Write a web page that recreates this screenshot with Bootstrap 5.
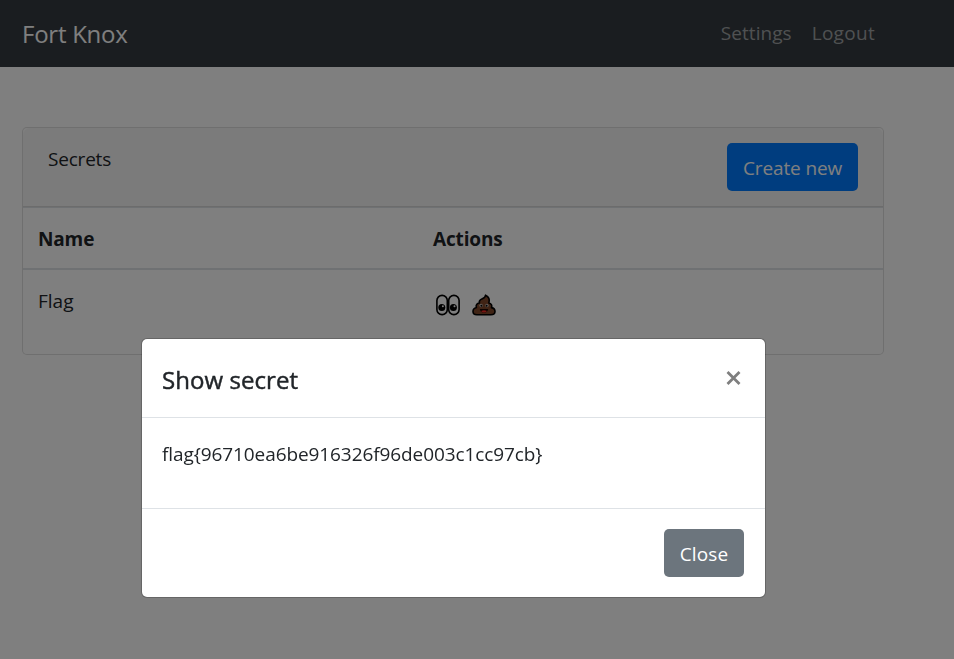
<!DOCTYPE html>
<html lang="en">
<head>
<meta charset="utf-8">
<meta name="viewport" content="width=device-width, initial-scale=1">
<title>Fort Knox</title>
<link href="https://cdn.jsdelivr.net/npm/bootstrap@5.3.0/dist/css/bootstrap.min.css" rel="stylesheet">
<style>
html{font-size:20px}
body{font-family:"Open Sans","Noto Sans",sans-serif;font-size:19px;line-height:30px;color:#212529;overflow:hidden;letter-spacing:-.2px}
.topbar{background:#343a40;height:67px;padding:0 69px 0 22px}
.topbar .navbar-brand{font-size:24px;line-height:38px;letter-spacing:-.25px}
.topbar .nav-link{color:rgba(255,255,255,.54);padding:7px 10px 9px;line-height:30px;letter-spacing:.05px}
.topbar .nav-logout{letter-spacing:.3px}
.vault{width:862px;margin:60px 0 0 22px;border:1px solid rgba(0,0,0,.125);border-radius:5px}
.vault .card-header{height:79px;padding:15px 25px;background:rgba(0,0,0,.03);border-bottom:1px solid rgba(0,0,0,.125)}
.secrets-label{padding-top:1px}
.vault .table{--bs-table-color:#212529;--bs-table-bg:transparent;table-layout:fixed}
.vault th{height:61px;padding:16px 15px 12px;border-top:1px solid #dee2e6;border-bottom:2px solid #dee2e6;letter-spacing:-.15px;vertical-align:top}
.vault td{height:85px;padding:16px 15px;border:0;letter-spacing:0}
.vault .name-col{width:395px}
.btn{font-size:19px;line-height:30px;height:48px;padding:10px 0 8px;border:0;border-radius:5px;letter-spacing:-.12px}
.btn-create{background:#007bff;color:#fff;width:131px}
.btn-close-dialog{background:#6c757d;color:#fff;width:80px;letter-spacing:.1px}
.emoji-row{gap:12px;padding:8px 0 0 3px}
.emoji-btn{display:block;padding:0;border:0;background:none;line-height:0}
.modal-backdrop{--bs-backdrop-opacity:.5}
.modal-dialog{max-width:625px;width:625px;margin:338px 0 0 141px}
.modal-content{border:1px solid rgba(0,0,0,.2);border-radius:6px}
.modal-header{height:79px;padding:20px;border-bottom:1px solid #dee2e6;border-radius:0}
.modal-title{font-size:24px;line-height:38px;font-weight:400;letter-spacing:.06px;-webkit-text-stroke:.45px #212529;padding-top:2px}
.modal-body{height:90px;padding:21px 20px 19px}
.modal-footer{height:89px;padding:20px 21px;border-top:1px solid #dee2e6;align-items:flex-start}
.modal-footer .btn{margin:0}
.flag-text{letter-spacing:-.09px}
.x-btn{padding:0;border:0;background:none;line-height:0;margin:12px 4px 0 0}
</style>
<script src="https://cdn.jsdelivr.net/npm/bootstrap@5.3.0/dist/js/bootstrap.bundle.min.js"></script>
</head>
<body class="modal-open">
<nav class="navbar navbar-expand topbar">
  <a class="navbar-brand text-white p-0 m-0" href="#">Fort Knox</a>
  <ul class="navbar-nav ms-auto">
    <li class="nav-item"><a class="nav-link" href="#">Settings</a></li>
    <li class="nav-item"><a class="nav-link nav-logout" href="#">Logout</a></li>
  </ul>
</nav>
<main>
  <div class="card vault">
    <div class="card-header d-flex justify-content-between align-items-start">
      <span class="secrets-label">Secrets</span>
      <button class="btn btn-create" type="button">Create new</button>
    </div>
    <table class="table mb-0">
      <thead><tr><th class="name-col">Name</th><th>Actions</th></tr></thead>
      <tbody>
        <tr>
          <td>Flag</td>
          <td>
            <div class="d-flex align-items-center emoji-row">
              <button class="emoji-btn" type="button" aria-label="Show">
                <svg width="24" height="22" viewBox="0 0 24 22">
                  <g fill="#fff" fill-opacity=".9" stroke="#000" stroke-width="1.6"><rect x=".9" y="1.4" width="10.4" height="19.2" rx="5.2"/><rect x="12.7" y="1.4" width="10.4" height="19.2" rx="5.2"/></g>
                  <circle cx="5.8" cy="13.6" r="3.5"/><circle cx="17.4" cy="13.6" r="3.5"/>
                  <circle cx="6.9" cy="12.2" r="1" fill="#fff"/><circle cx="18.5" cy="12.2" r="1" fill="#fff"/>
                </svg>
              </button>
              <button class="emoji-btn" type="button" aria-label="Delete">
                <svg width="24" height="22" viewBox="0 0 24 22">
                  <path d="M13.500 1.200c.3 2-1.500 2.900-3.600 3.700C7.800 5.800 6.900 7.300 7.500 9c-2.600.2-3.900 2.200-3.100 4.500C2.200 14 1 15.600 1 17.500c0 2.100 1.500 3.300 3.800 3.300h14c2.500 0 4.200-1.200 4.200-3.300 0-1.900-1.300-3.500-3.500-3.900.9-2.300-.3-4.300-2.600-4.600.9-3.100 0-6.300-3.400-7.800Z" fill="#80482a" stroke="#000" stroke-width="1.6" stroke-linejoin="round"/>
                  <circle cx="9.100" cy="11.500" r="1.700" fill="#c8bdb6"/><circle cx="14.900" cy="11.500" r="1.700" fill="#c8bdb6"/>
                  <circle cx="9.400" cy="11.700" r="1"/><circle cx="14.600" cy="11.700" r="1"/>
                  <path d="M7.800 15h8.400c-.3 2.400-2 3.700-4.200 3.700S8.100 17.400 7.800 15Z" fill="#1a0500"/>
                  <path d="M9.200 16.900c1.500-1 4.100-1 5.600 0-.9 2-4.700 2-5.600 0Z" fill="#f02a24"/>
                </svg>
              </button>
            </div>
          </td>
        </tr>
      </tbody>
    </table>
  </div>
</main>
<div class="modal show d-block" tabindex="-1" role="dialog" aria-label="Show secret">
  <div class="modal-dialog">
    <div class="modal-content">
      <div class="modal-header align-items-start">
        <h5 class="modal-title">Show secret</h5>
        <button class="x-btn" type="button" aria-label="Close"><svg width="15" height="14" viewBox="0 0 15 14"><path d="M1.500 1l12 12M13.500 1L1.500 13" stroke="#7f7f7f" stroke-width="2.800" fill="none"/></svg></button>
      </div>
      <div class="modal-body"><p class="mb-0 flag-text">flag{96710ea6be916326f96de003c1cc97cb}</p></div>
      <div class="modal-footer"><button class="btn btn-close-dialog" type="button">Close</button></div>
    </div>
  </div>
</div>
<div class="modal-backdrop show"></div>
</body>
</html>
